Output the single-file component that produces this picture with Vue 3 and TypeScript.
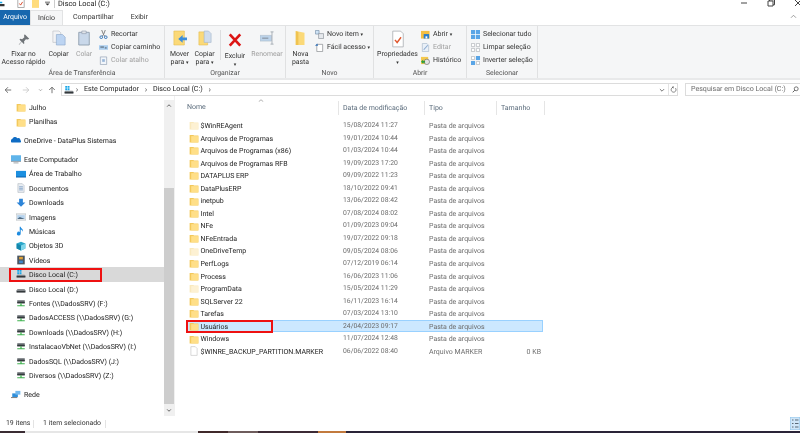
<template>
  <div class="explorer">
    <svg class="defs" xmlns="http://www.w3.org/2000/svg">
      <symbol id="folder" viewBox="0 0 16 16">
        <path d="M1 3h6l1 1h7v11H1z" fill="#f3c95c" />
        <path d="M3.500 5H15v10H3.500z" fill="#ffdf88" />
      </symbol>
      <symbol id="folder-ghost" viewBox="0 0 16 16">
        <path d="M1 3h6l1 1h7v11H1z" fill="#f9e9bd" />
        <path d="M3.500 5H15v10H3.500z" fill="#fdf1d3" />
      </symbol>
      <symbol id="drive" viewBox="0 0 16 16">
        <path d="M1 10l1.500-2h11l1.500 2v3.500H1z" fill="#8d9094" />
        <path d="M1 11h14v2.500H1z" fill="#33393c" />
      </symbol>
      <symbol id="drive-win" viewBox="0 0 16 16">
        <path d="M1 10l1.500-1h11l1.500 1v3.500H1z" fill="#8d9094" />
        <path d="M1 11h14v2.500H1z" fill="#33393c" />
        <path d="M2 1.500h3v3H2zM5.800 1.500h3v3h-3zM2 5.200h3v3H2zM5.800 5.200h3v3h-3z" fill="#18a7e8" />
      </symbol>
      <symbol id="netdrive" viewBox="0 0 16 16">
        <path d="M2 3.500h12v5H2z" fill="#70757a" />
        <path d="M2 6h12v2.500H2z" fill="#33393c" />
        <path d="M7 8.500h2v3h5V13H2v-1.500h5z" fill="#3fb34f" />
      </symbol>
    </svg>

    <div class="titlebar">
      <div class="qa">
        <svg class="qa-drive" viewBox="0 0 8 10"><path d="M0 5h6v3H0z" fill="#333" /><path d="M0 2h3v2H0z" fill="#18a7e8" /></svg>
        <svg class="qa-check" viewBox="0 0 10 10"><path d="M1 0h8v10H1z" fill="#fff" stroke="#9a9a9a" /><path d="M3 5l1.500 2L7 3" fill="none" stroke="#d9482b" stroke-width="1.200" /></svg>
        <svg class="qa-folder" viewBox="0 0 8 10"><path d="M0 0h8v10H0z" fill="#ffdc7d" /></svg>
        <svg class="qa-drop" viewBox="0 0 6 6"><path d="M0 1h6v.8H0z M.5 3h5L3 5.500z" fill="#333" /></svg>
        <i class="qa-sep"></i>
      </div>
      <span class="title">Disco Local (C:)</span>
      <div class="winctl">
        <svg viewBox="0 0 8 8"><path d="M1 4h6" stroke="#444" fill="none" /></svg>
        <svg viewBox="0 0 8 8"><path d="M1 2h5v5H1zM2.500 2V.8h5v5H6" stroke="#444" fill="none" /></svg>
        <svg viewBox="0 0 8 8"><path d="M1 1l6 6M7 1L1 7" stroke="#444" fill="none" /></svg>
      </div>
    </div>

    <div class="tabs">
      <span class="tab tab-file">Arquivo</span>
      <span class="tab tab-active">Início</span>
      <span class="tab tab-share">Compartilhar</span>
      <span class="tab tab-view">Exibir</span>
      <svg class="collapse" viewBox="0 0 8 6"><path d="M1 4.500L4 1.500l3 3" fill="none" stroke="#8a8a8a" /></svg>
    </div>

    <div class="ribbon">
      <section class="group g-area">
        <div class="group-body">
          <div class="big w-pin">
            <svg viewBox="0 0 16 16"><path d="M9 1l6 6-2 1-2.500-.5-2.500 3 .5 2.500-1 1-2.500-3L1.500 15 1 14.500l3.500-3.500L2 8l1-1 2.500.5 3-2.500L8 3z" fill="#6f7478" /></svg>
            <span>Fixar no<br />Acesso rápido</span>
          </div>
          <div class="big w-copy">
            <svg viewBox="0 0 16 18"><path d="M1 1h7l2 2v11H1z" fill="#f2f3f5" stroke="#b8bcc2" stroke-width=".7" /><path d="M5 5h7l3 3v9H5z" fill="#bcd4f2" stroke="#8aa6c9" stroke-width=".7" /></svg>
            <span>Copiar</span>
          </div>
          <div class="big w-paste off">
            <svg viewBox="0 0 16 18"><path d="M2 2.500h12V17H2z" fill="#c9d8ea" stroke="#8d9bad" /><path d="M5.500 1h5v3h-5z" fill="#dfe3e8" stroke="#8d9bad" stroke-width=".7" /></svg>
            <span>Colar</span>
          </div>
          <div class="smalls">
            <div class="small">
              <svg viewBox="0 0 10 10"><path d="M3 0l2 5 2-5M3.500 7L5 5l1.500 2" fill="none" stroke="#777" /><circle cx="2.500" cy="8" r="1.500" fill="none" stroke="#2c6fb5" /><circle cx="7.500" cy="8" r="1.500" fill="none" stroke="#2c6fb5" /></svg>
              <span>Recortar</span>
            </div>
            <div class="small">
              <svg viewBox="0 0 10 10"><path d="M0 2.500h10v5H0z" fill="#a9cdef" /><path d="M1.500 4.500h4M6.500 5.500h2" stroke="#333" stroke-width=".8" /></svg>
              <span>Copiar caminho</span>
            </div>
            <div class="small off">
              <svg viewBox="0 0 10 10"><path d="M1.500 1h7v8.500h-7z" fill="#f1f5fa" stroke="#8c9bb0" stroke-width=".7" /><path d="M3.500 3.500h3v3h-3z" fill="#9ab7d8" /></svg>
              <span>Colar atalho</span>
            </div>
          </div>
        </div>
        <div class="group-label">Área de Transferência</div>
      </section>

      <section class="group g-org">
        <div class="group-body">
          <div class="big w-move">
            <svg viewBox="0 0 16 18"><path d="M1 1h12v16H1z" fill="#fbd978" stroke="#e3b949" stroke-width=".6" /><path d="M16 8.500h-5V5.500L6 10l5 4.500v-3h5z" fill="#3d8edb" /></svg>
            <span>Mover<br />para <b>▾</b></span>
          </div>
          <div class="big w-copyto">
            <svg viewBox="0 0 16 18"><path d="M1 2h10v15H1z" fill="#fbd978" stroke="#e3b949" stroke-width=".6" /><path d="M7 1h5l3 3v10H7z" fill="#cfdcec" stroke="#9baec6" stroke-width=".6" /></svg>
            <span>Copiar<br />para <b>▾</b></span>
          </div>
          <i class="inner-sep"></i>
          <div class="big w-del">
            <svg viewBox="0 0 16 16"><path d="M2 1.500l12 13M14 1.500L2 14.500" stroke="#dc1414" stroke-width="3" fill="none" /></svg>
            <span>Excluir<br /><b>▾</b></span>
          </div>
          <div class="big w-ren off">
            <svg viewBox="0 0 16 16"><path d="M0 5h13v6.500H0z" fill="#bcd3ea" stroke="#a9b8c7" stroke-width=".6" /><path d="M2.500 8.200h7" stroke="#8b97a5" stroke-width="1.400" /><path d="M12 1h3.500M13.700 1v14M12 15h3.500" stroke="#8f98a1" fill="none" stroke-width=".8" /></svg>
            <span>Renomear</span>
          </div>
        </div>
        <div class="group-label">Organizar</div>
      </section>

      <section class="group g-novo">
        <div class="group-body">
          <div class="big w-nova">
            <svg viewBox="0 0 16 18"><path d="M2 1l10 2v14H2z" fill="#fbd978" /><path d="M2 1v16h3V2z" fill="#f0c350" /></svg>
            <span>Nova<br />pasta</span>
          </div>
          <div class="smalls">
            <div class="small">
              <svg viewBox="0 0 10 10"><path d="M.5.500h4v4h-4z" fill="#cfe3f5" stroke="#6f8aa5" stroke-width=".7" /><path d="M4 4h5.500v5.500H4z" fill="#e6e9ed" stroke="#858c94" stroke-width=".7" /></svg>
              <span>Novo item <b>▾</b></span>
            </div>
            <div class="small">
              <svg viewBox="0 0 10 10"><path d="M2 1.500h6.500v8H2z" fill="#fff" stroke="#7b8085" stroke-width=".7" /><path d="M0 3l2.500-2.500L3.500 3z" fill="#2d6fb8" /></svg>
              <span>Fácil acesso <b>▾</b></span>
            </div>
          </div>
        </div>
        <div class="group-label">Novo</div>
      </section>

      <section class="group g-abrir">
        <div class="group-body">
          <div class="big w-prop">
            <svg viewBox="0 0 16 20"><path d="M2 1h9l3 3v15H2z" fill="#fff" stroke="#9fa3a8" stroke-width=".8" /><path d="M4.500 11l2.500 3 4.500-6" fill="none" stroke="#e0582f" stroke-width="1.600" /></svg>
            <span>Propriedades<br /><b>▾</b></span>
          </div>
          <div class="smalls">
            <div class="small">
              <svg viewBox="0 0 10 10"><path d="M0 1h9.500v8.500H0z" fill="#f3bf42" /><path d="M3 4.500h6v5H3z" fill="#2c7ec9" /><path d="M5 7h2v2.500H5z" fill="#fff" /></svg>
              <span>Abrir <b>▾</b></span>
            </div>
            <div class="small off">
              <svg viewBox="0 0 10 10"><path d="M1.500.500h5l2 2v7h-7z" fill="#e9f0f8" stroke="#a4b5c9" stroke-width=".7" /><path d="M3 7.500L7.500 2.500" stroke="#89a8cf" stroke-width="1.200" /></svg>
              <span>Editar</span>
            </div>
            <div class="small">
              <svg viewBox="0 0 10 10"><path d="M0 1h8v8H0z" fill="#f5c94f" /><circle cx="6.500" cy="6.500" r="3" fill="#e4e4e4" stroke="#666" stroke-width=".7" /><path d="M0 6.500l2.500-2.500v1.500h2v2h-2V9z" fill="#2f9e3f" /></svg>
              <span>Histórico</span>
            </div>
          </div>
        </div>
        <div class="group-label">Abrir</div>
      </section>

      <section class="group g-sel">
        <div class="group-body">
          <div class="smalls">
            <div class="small">
              <svg viewBox="0 0 10 10"><path d="M0 0h10v10H0z" fill="#5aa5e6" /><path d="M5 0v10M0 5h10" stroke="#fff" stroke-width=".8" /></svg>
              <span>Selecionar tudo</span>
            </div>
            <div class="small">
              <svg viewBox="0 0 10 10"><path d="M.5.500h3.500v3.500H.5zM6 .500h3.500v3.500H6zM.5 6H4v3.500H.5zM6 6h3.500v3.500H6z" fill="#fff" stroke="#a9adb2" stroke-width=".7" /></svg>
              <span>Limpar seleção</span>
            </div>
            <div class="small">
              <svg viewBox="0 0 10 10"><path d="M.5.500h3.500v3.500H.5zM6 6h3.500v3.500H6z" fill="#fff" stroke="#a9adb2" stroke-width=".7" /><path d="M5.500 0H10v4.500H5.500zM0 5.500h4.500V10H0z" fill="#5aa5e6" /></svg>
              <span>Inverter seleção</span>
            </div>
          </div>
        </div>
        <div class="group-label">Selecionar</div>
      </section>
    </div>

    <div class="addressrow">
      <div class="navbtns">
        <svg viewBox="0 0 10 10"><path d="M9 5H1.500M5 1.500L1.500 5 5 8.500" fill="none" stroke="#555" /></svg>
        <svg viewBox="0 0 10 10"><path d="M1 5h7.500M5 1.500L8.500 5 5 8.500" fill="none" stroke="#c4c4c4" /></svg>
        <svg class="mini" viewBox="0 0 10 10"><path d="M2 3.500l3 3 3-3" fill="none" stroke="#666" /></svg>
        <svg viewBox="0 0 10 10"><path d="M5 9V1.500M1.500 5L5 1.500 8.500 5" fill="none" stroke="#555" /></svg>
      </div>
      <div class="addressbox">
        <svg class="addr-icon"><use href="#drive-win" /></svg>
        <span class="crumb-sep">›</span>
        <span class="crumb">Este Computador</span>
        <span class="crumb-sep">›</span>
        <span class="crumb">Disco Local (C:)</span>
        <span class="crumb-sep">›</span>
        <svg class="addr-drop" viewBox="0 0 10 10"><path d="M1.500 3.500L5 7l3.500-3.500" fill="none" stroke="#444" stroke-width="1.200" /></svg>
        <i class="addr-div"></i>
        <svg class="addr-refresh" viewBox="0 0 10 10"><path d="M7.800 3a3.500 3.500 0 1 1-2.800-1.200H3.500M5 .5L3.500 1.800 5 3" fill="none" stroke="#555" /></svg>
      </div>
      <div class="searchbox">
        <span>Pesquisar em Disco Local (C:)</span>
        <svg viewBox="0 0 10 10"><circle cx="6" cy="4" r="2.800" fill="none" stroke="#444" /><path d="M4 6L1 9" stroke="#444" stroke-width="1.200" /></svg>
      </div>
    </div>

    <div class="main">
      <aside class="nav">
        <div class="nav-list">
          <div
            v-for="item in navItems"
            :key="item.label"
            class="nav-row"
            :class="[`lvl-${item.level}`, { selected: item.selected, gap: item.gap }]"
          >
            <svg v-if="item.icon.startsWith('#')" class="nav-icon"><use :href="item.icon" /></svg>
            <svg v-else class="nav-icon" viewBox="0 0 16 16" v-html="customIcons[item.icon]"></svg>
            <span>{{ item.label }}</span>
            <i v-if="item.selected" class="redbox redbox-nav"></i>
          </div>
        </div>
        <div class="scroll">
          <svg class="arrow" viewBox="0 0 8 6"><path d="M1.500 4.500L4 2l2.500 2.500" fill="none" stroke="#555" stroke-width="1.200" /></svg>
          <div class="track"><div class="thumb"></div></div>
          <svg class="arrow" viewBox="0 0 8 6"><path d="M1.500 1.500L4 4l2.500-2.500" fill="none" stroke="#555" stroke-width="1.200" /></svg>
        </div>
      </aside>

      <div class="files">
        <div class="file-head">
          <svg class="sort" viewBox="0 0 8 4"><path d="M1 3.500L4 1l3 2.500" fill="none" stroke="#999" /></svg>
          <span class="c-name">Nome</span>
          <span class="c-date">Data de modificação</span>
          <span class="c-type">Tipo</span>
          <span class="c-size">Tamanho</span>
        </div>
        <div class="file-list">
          <div v-for="f in files" :key="f.name" class="file-row" :class="{ selected: f.selected }">
            <span class="c-name">
              <svg v-if="f.kind === 'file'" class="file-icon" viewBox="0 0 16 16"><path d="M3 1h7l3 3v11H3z" fill="#fff" stroke="#c2c2c2" /></svg>
              <svg v-else class="file-icon"><use :href="f.kind === 'ghost' ? '#folder-ghost' : '#folder'" /></svg>
              <b>{{ f.name }}</b>
            </span>
            <span class="c-date">{{ f.date }}</span>
            <span class="c-type">{{ f.type }}</span>
            <span class="c-size">{{ f.size }}</span>
            <i v-if="f.selected" class="redbox redbox-file"></i>
          </div>
        </div>
      </div>
    </div>

    <div class="statusbar">
      <span class="st-count">19 itens</span>
      <span class="st-sel">1 item selecionado</span>
      <svg class="st-view" viewBox="0 0 10 13"><path d="M0 0h10v13H0z" fill="#cfe6f8" stroke="#8fc4ea" /><path d="M2 3h1.500M5 3h3.500M2 6.500h1.500M5 6.500h3.500M2 10h1.500M5 10h3.500" stroke="#5b6a78" /></svg>
    </div>
    <div class="taskstrip">
      <i v-for="s in strip" :key="s.color" :style="{ width: s.width + 'px', background: s.color }"></i>
    </div>
  </div>
</template>

<script setup lang="ts">
interface NavItem {
  label: string
  icon: string
  level: number
  selected?: boolean
  gap?: boolean
}

interface FileItem {
  name: string
  date: string
  type: string
  size?: string
  kind?: string
  selected?: boolean
}

const customIcons: Record<string, string> = {
  cloud: '<path d="M1 12a3 3 0 0 1 1-5.500 4.500 4.500 0 0 1 8-1.500 3.500 3.500 0 0 1 5 3.500 2 2 0 0 1 0 3.500z" fill="#0f6cc4"/>',
  pc: '<path d="M0 2h16v10H0z" fill="#5fb4ea"/><path d="M0 11h16v1.500H0z" fill="#9a9fa5"/><path d="M4 13.500h8V15H4z" fill="#9a9fa5"/>',
  desk: '<path d="M0 3h16v10H0z" fill="#1c8fe0"/><path d="M0 12h16v1.500H0z" fill="#0d5fa8"/>',
  docs: '<path d="M3 1h7l3 3v11H3z" fill="#e9edf2" stroke="#9ba3ad" stroke-width=".7"/><path d="M5 6h6M5 8.500h6M5 11h6" stroke="#5a87b8"/>',
  down: '<path d="M5 1h6v6h4l-7 7-7-7h4z" fill="#2d84d8"/>',
  images: '<path d="M0 3h16v10H0z" fill="#eef1f4" stroke="#8b929a" stroke-width=".7"/><path d="M2 5h12v6H2z" fill="#b6d3ee"/><path d="M2 11l4-3 8 3z" fill="#4d6a82"/>',
  music: '<path d="M6 1h1.500c.5 3 5 4 3.500 8-.5-2-2-3-3.500-3.500V12a3 3 0 1 1-1.500-2.500z" fill="#1e8be0"/>',
  obj: '<path d="M1 4l7-3 7 3v8l-7 3-7-3z" fill="#2aa6c9"/><path d="M8 7l7-3v8l-7 3z" fill="#7fd6ea"/><path d="M1 4l7 3v8l-7-3z" fill="#1587ad"/>',
  video: '<path d="M2 1h12v14H2z" fill="#4a5560"/><path d="M5 3h6v4H5z" fill="#e0a33a"/><path d="M5 9h6v4H5z" fill="#3f86c9"/>',
  net: '<path d="M2 7h9v6H2z" fill="#2f8fdb"/><path d="M7 3h8v6H7z" fill="#73b8ee"/><path d="M0 13h10v1.500H0z" fill="#777"/>'
}

const navItems: NavItem[] = [
  { label: 'Julho', icon: '#folder', level: 2 },
  { label: 'Planilhas', icon: '#folder', level: 2 },
  { label: 'OneDrive - DataPlus Sistemas', icon: 'cloud', level: 1, gap: true },
  { label: 'Este Computador', icon: 'pc', level: 1, gap: true },
  { label: 'Área de Trabalho', icon: 'desk', level: 2 },
  { label: 'Documentos', icon: 'docs', level: 2 },
  { label: 'Downloads', icon: 'down', level: 2 },
  { label: 'Imagens', icon: 'images', level: 2 },
  { label: 'Músicas', icon: 'music', level: 2 },
  { label: 'Objetos 3D', icon: 'obj', level: 2 },
  { label: 'Vídeos', icon: 'video', level: 2 },
  { label: 'Disco Local (C:)', icon: '#drive-win', level: 2, selected: true },
  { label: 'Disco Local (D:)', icon: '#drive', level: 2 },
  { label: 'Fontes (\\\\DadosSRV) (F:)', icon: '#netdrive', level: 2 },
  { label: 'DadosACCESS (\\\\DadosSRV) (G:)', icon: '#netdrive', level: 2 },
  { label: 'Downloads (\\\\DadosSRV) (H:)', icon: '#netdrive', level: 2 },
  { label: 'InstalacaoVbNet (\\\\DadosSRV) (I:)', icon: '#netdrive', level: 2 },
  { label: 'DadosSQL (\\\\DadosSRV) (J:)', icon: '#netdrive', level: 2 },
  { label: 'Diversos (\\\\DadosSRV) (Z:)', icon: '#netdrive', level: 2 },
  { label: 'Rede', icon: 'net', level: 1, gap: true }
]

const folderType = 'Pasta de arquivos'

const files: FileItem[] = [
  { name: '$WinREAgent', date: '15/08/2024 11:27', type: folderType, kind: 'ghost' },
  { name: 'Arquivos de Programas', date: '19/01/2024 10:44', type: folderType },
  { name: 'Arquivos de Programas (x86)', date: '01/03/2024 10:44', type: folderType },
  { name: 'Arquivos de Programas RFB', date: '19/09/2023 17:20', type: folderType },
  { name: 'DATAPLUS ERP', date: '09/09/2022 11:23', type: folderType },
  { name: 'DataPlusERP', date: '18/10/2022 09:41', type: folderType },
  { name: 'inetpub', date: '13/06/2022 08:42', type: folderType },
  { name: 'Intel', date: '07/08/2024 08:02', type: folderType },
  { name: 'NFe', date: '01/09/2023 09:04', type: folderType },
  { name: 'NFeEntrada', date: '19/07/2022 09:18', type: folderType },
  { name: 'OneDriveTemp', date: '09/05/2024 08:06', type: folderType, kind: 'ghost' },
  { name: 'PerfLogs', date: '07/12/2019 06:14', type: folderType },
  { name: 'Process', date: '16/06/2023 11:06', type: folderType },
  { name: 'ProgramData', date: '15/05/2024 11:29', type: folderType, kind: 'ghost' },
  { name: 'SQLServer 22', date: '16/11/2023 16:14', type: folderType },
  { name: 'Tarefas', date: '07/03/2024 13:10', type: folderType },
  { name: 'Usuários', date: '24/04/2023 09:17', type: folderType, selected: true },
  { name: 'Windows', date: '11/07/2024 12:48', type: folderType },
  { name: '$WINRE_BACKUP_PARTITION.MARKER', date: '06/06/2022 08:40', type: 'Arquivo MARKER', size: '0 KB', kind: 'file' }
]

const strip = [
  { width: 25, color: '#3a2c33' },
  { width: 173, color: '#e6e6e6' },
  { width: 30, color: '#40292a' },
  { width: 30, color: '#6e5c5c' },
  { width: 60, color: '#3c2a35' },
  { width: 28, color: '#c27a3e' },
  { width: 454, color: '#2a2438' }
]
</script>

<style>
html,
body {
  margin: 0;
  background: #fff;
}
</style>

<style scoped>
.explorer {
  width: 800px;
  height: 433px;
  overflow: hidden;
  display: flex;
  flex-direction: column;
  background: #fff;
  color: #222;
  font-family: Roboto, "Noto Sans", sans-serif;
  font-size: 7px;
  line-height: 1.15;
  text-rendering: geometricPrecision;
  filter: blur(0.3px);
}
.defs {
  display: none;
}
svg {
  flex: none;
  display: block;
}

/* barra de titulo */
.titlebar {
  height: 10px;
  display: flex;
  align-items: flex-start;
  overflow: hidden;
}
.qa {
  width: 58px;
  display: flex;
  align-items: center;
  margin-top: -1px;
}
.qa-drive {
  width: 6px;
  height: 8px;
}
.qa-check {
  width: 8px;
  height: 9px;
  margin-left: 11px;
}
.qa-folder {
  width: 7px;
  height: 9px;
  margin-left: 7px;
}
.qa-drop {
  width: 5px;
  height: 5px;
  margin-left: 6px;
}
.qa-sep {
  width: 1px;
  height: 9px;
  background: #ccc;
  margin-left: 4px;
}
.title {
  font-size: 7.4px;
  line-height: 8px;
  color: #222;
}
.winctl {
  margin-left: auto;
  display: flex;
  gap: 19px;
  margin-right: -2px;
  margin-top: -1px;
}
.winctl svg {
  width: 8px;
  height: 8px;
}

/* abas */
.tabs {
  height: 15px;
  display: flex;
  align-items: center;
  position: relative;
}
.tab {
  height: 15px;
  line-height: 15px;
  color: #333;
  font-size: 7px;
}
.tab-file {
  background: #1767ae;
  color: #fff;
  width: 30px;
  text-align: center;
}
.tab-active {
  background: #f5f6f7;
  width: 33px;
  text-align: center;
  border: 1px solid #e2e3e4;
  border-bottom: 0;
  box-sizing: border-box;
}
.tab-share {
  margin-left: 10px;
}
.tab-view {
  margin-left: 17px;
}
.collapse {
  position: absolute;
  right: 3px;
  top: 4px;
  width: 7px;
  height: 5px;
}

/* faixa de opcoes */
.ribbon {
  height: 55px;
  flex: none;
  display: flex;
  background: #f5f6f7;
  border-top: 1px solid #e2e3e4;
  border-bottom: 2px solid #e8e9ea;
  box-sizing: border-box;
}
.group {
  display: flex;
  flex-direction: column;
  border-right: 1px solid #e0e1e2;
  box-sizing: border-box;
}
.g-area {
  width: 165px;
}
.g-org {
  width: 121px;
}
.g-novo {
  width: 88px;
}
.g-abrir {
  width: 93px;
}
.g-sel {
  width: 71px;
}
.group-body {
  flex: 1;
  display: flex;
  min-height: 0;
}
.group-label {
  height: 9px;
  line-height: 9px;
  text-align: center;
  color: #555;
  font-size: 6.9px;
}
.big {
  display: flex;
  flex-direction: column;
  align-items: center;
  text-align: center;
  padding-top: 4px;
  box-sizing: border-box;
  font-size: 6.9px;
  line-height: 8px;
  color: #333;
  white-space: nowrap;
}
.big svg {
  width: 14px;
  height: 16px;
  margin-bottom: 4px;
}
.big b {
  font-size: 5px;
  font-weight: 400;
}
.off,
.off span {
  color: #a0a0a0;
}
.w-pin {
  width: 47px;
}
.w-pin svg {
  width: 12px;
  height: 13px;
  margin: 3px 0 4px;
}
.w-copy {
  width: 23px;
}
.w-paste {
  width: 28px;
}
.w-move,
.w-copyto {
  width: 25px;
}
.w-move {
  margin-left: 2px;
}
.inner-sep {
  width: 1px;
  height: 30px;
  margin: 4px 0 0 3px;
  background: #dcdddf;
}
.w-del {
  width: 28px;
}
.w-del svg {
  margin-top: 2px;
  margin-bottom: 4px;
}
.w-ren {
  width: 36px;
}
.w-nova {
  width: 29px;
}
.w-prop {
  width: 47px;
}
.w-prop svg {
  height: 18px;
  margin-bottom: 2px;
}
.smalls {
  display: flex;
  flex-direction: column;
  gap: 3.2px;
  padding-top: 3px;
  white-space: nowrap;
}
.small {
  height: 10px;
  display: flex;
  align-items: center;
  gap: 3px;
  font-size: 7px;
  color: #333;
}
.small svg {
  width: 9px;
  height: 9px;
}
.small b {
  font-weight: 400;
  font-size: 5px;
}
.g-area .smalls {
  margin-left: 1px;
}
.g-sel .smalls {
  margin-left: 4px;
}

/* endereco */
.addressrow {
  height: 16px;
  display: flex;
  align-items: flex-end;
  flex: none;
}
.navbtns {
  width: 61px;
  height: 13px;
  display: flex;
  align-items: center;
  padding-left: 4px;
  box-sizing: border-box;
  gap: 10px;
}
.navbtns svg {
  width: 8px;
  height: 8px;
}
.navbtns .mini {
  width: 5px;
  margin: 0 -4.5px 0 -2.5px;
}
.addressbox {
  width: 617px;
  height: 13px;
  box-sizing: border-box;
  border: 1px solid #dcdcdc;
  display: flex;
  align-items: center;
  padding-left: 2px;
}
.addr-icon {
  width: 10px;
  height: 10px;
  margin-right: -4px;
}
.crumb {
  color: #222;
  font-size: 7.1px;
}
.crumb-sep {
  color: #555;
  width: 14px;
  text-align: center;
  font-size: 8px;
}
.addr-drop {
  width: 6px;
  height: 6px;
  margin-left: auto;
}
.addr-div {
  width: 1px;
  height: 11px;
  background: #e3e3e3;
  margin: 0 1px 0 3px;
}
.addr-refresh {
  width: 7px;
  height: 7px;
}
.searchbox {
  width: 115px;
  height: 13px;
  margin-left: 7px;
  box-sizing: border-box;
  border: 1px solid #dcdcdc;
  border-right: 0;
  display: flex;
  align-items: center;
  justify-content: space-between;
  padding: 0 1px 0 5px;
  color: #6b6b6b;
  font-size: 7.1px;
  white-space: nowrap;
}
.searchbox svg {
  width: 7px;
  height: 7px;
}

/* corpo */
.main {
  flex: 1;
  min-height: 0;
  display: flex;
}
.nav {
  width: 175px;
  display: flex;
  flex: none;
  border-right: 1px solid #f0f0f0;
  box-sizing: border-box;
}
.nav-list {
  width: 165px;
  padding-top: 4px;
}
.nav-row {
  height: 14.4px;
  display: flex;
  align-items: center;
  position: relative;
  white-space: nowrap;
  color: #222;
  font-size: 7px;
}
.nav-row span {
  padding-top: 1.5px;
}
.nav-row.gap {
  margin-top: 4.5px;
}
.lvl-1 {
  padding-left: 11px;
}
.lvl-2 {
  padding-left: 16px;
}
.nav-icon {
  width: 10px;
  height: 10px;
  margin-right: 3px;
}
.nav-row.selected {
  background: #d9d9d9;
}
.redbox {
  position: absolute;
  border: 2px solid #ee1111;
  box-sizing: border-box;
  pointer-events: none;
}
.redbox-nav {
  left: 9px;
  top: 0.5px;
  width: 93px;
  height: 14px;
}
.scroll {
  width: 10px;
  margin-top: 4px;
  background: #f0f0f0;
  display: flex;
  flex-direction: column;
  align-items: center;
}
.arrow {
  width: 6px;
  height: 5px;
  margin: 3px 0;
}
.track {
  flex: 1;
  width: 100%;
  padding-top: 77px;
  padding-bottom: 1px;
  box-sizing: border-box;
  display: flex;
}
.thumb {
  flex: 1;
  background: #cdcdcd;
}

/* lista de arquivos */
.files {
  flex: 1;
  min-width: 0;
}
.file-head {
  height: 23px;
  display: flex;
  align-items: center;
  position: relative;
  padding-left: 12px;
  color: #5a6b7b;
  font-size: 7px;
}
.sort {
  position: absolute;
  left: 83px;
  top: 3px;
  width: 6px;
  height: 3px;
}
.c-name {
  width: 156px;
  display: flex;
  align-items: center;
  flex: none;
}
.c-date {
  width: 86px;
  flex: none;
}
.c-type {
  width: 72px;
  flex: none;
}
.c-size {
  width: 48px;
  flex: none;
}
.file-head span {
  height: 14px;
  line-height: 15px;
  border-right: 1px solid #e5e5e5;
  box-sizing: border-box;
}
.file-head .c-name {
  width: 152px;
}
.file-head .c-date,
.file-head .c-type,
.file-head .c-size {
  padding-left: 4px;
}
.file-row {
  height: 12.56px;
  display: flex;
  align-items: center;
  position: relative;
  margin-left: 11px;
  width: 357px;
  color: #6d6d6d;
  font-size: 7px;
  white-space: nowrap;
  box-sizing: border-box;
}
.file-row .c-name {
  width: 157px;
}
.file-row .c-name b {
  font-weight: 400;
  color: #222;
  padding-top: 1.5px;
}
.file-row .c-date {
  font-size: 6.8px;
}
.file-row .c-date,
.file-row .c-type,
.file-row .c-size {
  padding-top: 1.5px;
}
.file-row .c-size {
  width: 40px;
  text-align: right;
}
.file-icon {
  width: 10px;
  height: 10px;
  margin: 0 1.5px 0 3px;
}
.file-row.selected {
  background: #cce8ff;
  outline: 1px solid #99d1ff;
  outline-offset: -1px;
}
.redbox-file {
  left: 0;
  top: 0;
  width: 87px;
  height: 13.5px;
}

/* status */
.statusbar {
  height: 15px;
  display: flex;
  align-items: center;
  flex: none;
  color: #333;
  font-size: 6.9px;
  position: relative;
  padding-top: 1px;
  box-sizing: border-box;
}
.st-count {
  margin-left: 6px;
  width: 27px;
  border-right: 1px solid #e3e3e3;
}
.st-sel {
  margin-left: 9px;
  width: 62px;
  border-right: 1px solid #e3e3e3;
}
.st-view {
  position: absolute;
  right: 0;
  top: 1px;
  width: 10px;
  height: 13px;
}
.taskstrip {
  height: 2px;
  flex: none;
  display: flex;
}
.taskstrip i {
  display: block;
  height: 2px;
}
</style>
